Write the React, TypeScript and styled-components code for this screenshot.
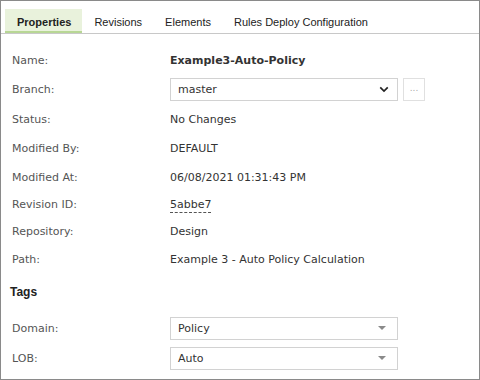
import React from 'react'
import styled, { createGlobalStyle } from 'styled-components'

const Global = createGlobalStyle`
  html, body { margin: 0; padding: 0; background: #fff; }
  body { font-family: "DejaVu Sans", Verdana, sans-serif; }
`

const rows: { label: string; value: React.ReactNode; h: number }[] = [
  { label: 'Status:', value: 'No Changes', h: 30 },
  { label: 'Modified By:', value: 'DEFAULT', h: 29 },
  { label: 'Modified At:', value: '06/08/2021 01:31:43 PM', h: 28 },
  { label: 'Revision ID:', value: <Dashed>5abbe7</Dashed>, h: 27 },
  { label: 'Repository:', value: 'Design', h: 27 },
  { label: 'Path:', value: 'Example 3 - Auto Policy Calculation', h: 28 },
]

export default function App() {
  return (
    <Frame>
      <Global />
      <Tabs>
        <Tab active>Properties</Tab>
        <Tab>Revisions</Tab>
        <Tab>Elements</Tab>
        <Tab>Rules Deploy Configuration</Tab>
      </Tabs>
      <Body>
        <Row h={29}>
          <Label>Name:</Label>
          <Value bold>Example3-Auto-Policy</Value>
        </Row>
        <Row h={29}>
          <Label>Branch:</Label>
          <Inline>
            <Select>
              master
              <Chevron viewBox="0 0 12 8">
                <path d="M1.5 1.5 L6 6 L10.5 1.5" fill="none" stroke="#222" strokeWidth="2" />
              </Chevron>
            </Select>
            <DotsButton>...</DotsButton>
          </Inline>
        </Row>
        {rows.map((r) => (
          <Row key={r.label} h={r.h}>
            <Label>{r.label}</Label>
            <Value>{r.value}</Value>
          </Row>
        ))}
        <Heading>Tags</Heading>
        <Row h={30}>
          <Label>Domain:</Label>
          <Select>
            Policy
            <Caret />
          </Select>
        </Row>
        <Row h={30}>
          <Label>LOB:</Label>
          <Select>
            Auto
            <Caret />
          </Select>
        </Row>
      </Body>
    </Frame>
  )
}

const Frame = styled.div`
  box-sizing: border-box;
  width: 480px;
  height: 380px;
  border: 1px solid #8a8a8a;
  overflow: hidden;
  color: #333;
`

const Tabs = styled.div`
  display: flex;
  align-items: flex-end;
  height: 32px;
  padding-left: 4px;
  border-bottom: 1px solid #c8c8c8;
`

const Tab = styled.div<{ active?: boolean }>`
  box-sizing: border-box;
  display: flex;
  align-items: center;
  height: 24px;
  padding: 2px 11px 0 12px;
  font-family: "Liberation Sans", Arial, sans-serif;
  font-size: 11px;
  color: #222;
  font-weight: ${(p) => (p.active ? 'bold' : 'normal')};
  background: ${(p) => (p.active ? '#e9f2dc' : 'transparent')};
  box-shadow: ${(p) => (p.active ? 'inset 0 -2px 0 #b8d795' : 'none')};
`

const Body = styled.div`
  padding: 12px 0 0 11px;
`

const Row = styled.div<{ h: number }>`
  display: grid;
  grid-template-columns: 158px 1fr;
  align-items: center;
  height: ${(p) => p.h}px;
  font-size: 11px;
`

const Label = styled.div`
  color: #555;
`

const Value = styled.div<{ bold?: boolean }>`
  color: #333;
  font-weight: ${(p) => (p.bold ? 'bold' : 'normal')};
`

function Dashed({ children }: { children: React.ReactNode }) {
  return <DashedText>{children}</DashedText>
}

const DashedText = styled.span`
  border-bottom: 1px dashed #555;
  padding-bottom: 1px;
`

const Inline = styled.div`
  display: flex;
  align-items: center;
  gap: 5px;
`

const Select = styled.div`
  box-sizing: border-box;
  display: flex;
  align-items: center;
  justify-content: space-between;
  width: 228px;
  height: 23px;
  padding: 0 8px 0 7px;
  border: 1px solid #d2d2d2;
  background: #fff;
  color: #333;
  font-size: 11px;
`

const Chevron = styled.svg`
  width: 10px;
  height: 7px;
`

const Caret = styled.span`
  width: 0;
  height: 0;
  margin-right: 3px;
  border-left: 4px solid transparent;
  border-right: 4px solid transparent;
  border-top: 4px solid #8a8a8a;
`

const DotsButton = styled.div`
  box-sizing: border-box;
  display: flex;
  align-items: center;
  justify-content: center;
  width: 22px;
  height: 23px;
  border: 1px solid #e0e0e0;
  color: #aaa;
  font-size: 9px;
  padding-bottom: 3px;
`

const Heading = styled.div`
  margin: 12px 0 14px -2px;
  font-family: "Liberation Sans", Arial, sans-serif;
  font-weight: bold;
  font-size: 12px;
  color: #222;
`
